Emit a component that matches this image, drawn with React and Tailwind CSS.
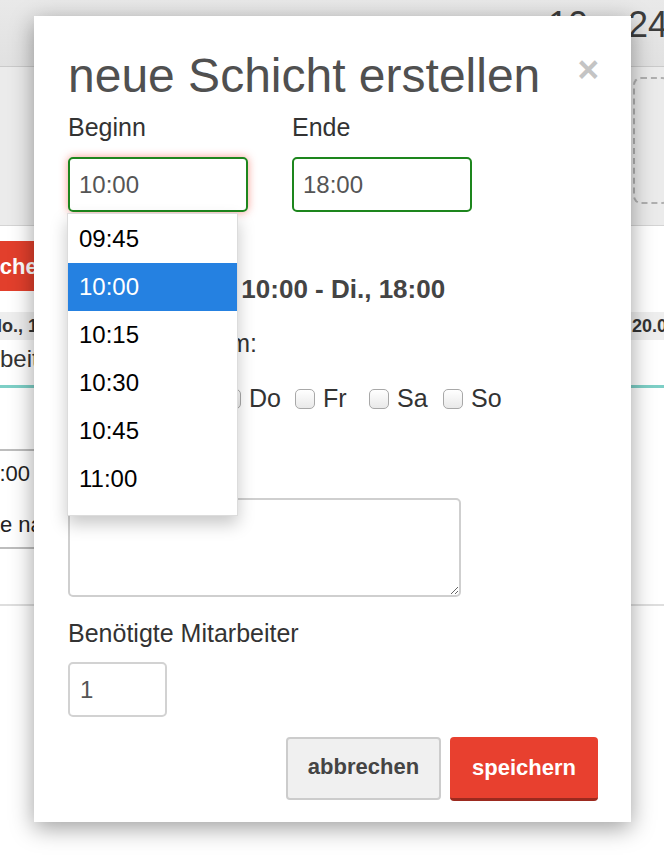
import React from 'react';

const times = ['09:45', '10:00', '10:15', '10:30', '10:45', '11:00'];

const days = [
    { label: 'Mo', w: 'w-[51px]' },
    { label: 'Di', w: 'w-[51px]' },
    { label: 'Mi', w: 'w-[51px]' },
    { label: 'Do', w: 'w-[74px]' },
    { label: 'Fr', w: 'w-[74px]' },
    { label: 'Sa', w: 'w-[74px]' },
    { label: 'So', w: 'w-[74px]' },
];

function Checkbox() {
    return (
        <span className="block w-[20px] h-[20px] shrink-0 rounded-[5px] border border-[#a8a8a8] bg-gradient-to-b from-white to-[#e9e9e9]" />
    );
}

export default function App() {
    return (
        <div className="relative w-[664px] h-[862px] overflow-hidden bg-white font-['Liberation_Sans',Arial,sans-serif]">

            {/* page behind the dialog */}
            <div className="h-[67px] bg-gradient-to-b from-[#e9e9e9] to-[#e1e1e1] border-b border-[#cacaca] flex justify-end pt-[7px] -mr-[4px]">
                <span className="text-[36px] leading-none text-[#3c3c3c] whitespace-nowrap">10 – 24</span>
            </div>
            <div className="h-[159px] bg-[#ebebeb] border-b border-[#d4d4d4] flex justify-end pt-[10px]">
                <div className="w-[37px] h-[127px] -mr-[6px] rounded-[8px] border-2 border-dashed border-[#b0b0b0]" />
            </div>
            <div className="mt-[15px] flex">
                <div className="h-[50px] -ml-[46px] pl-[12px] pr-[20px] flex items-center bg-[#e23f2c] text-white text-[22px] font-bold">
                    Woche hinzufügen
                </div>
            </div>
            <div className="mt-[21px] h-[28px] bg-[#eeeeee] flex items-center justify-between text-[18px] font-bold text-[#333]">
                <span className="-ml-[13px] whitespace-nowrap">Mo., 16.03.</span>
                <span className="-mr-[18px] whitespace-nowrap">Fr., 20.03.</span>
            </div>
            <div className="mt-[5px] h-[27px] flex items-center text-[24px] text-[#333]">
                <span className="-ml-[24px] whitespace-nowrap">Arbeitszeit</span>
            </div>
            <div className="mt-[13px] h-[3px] bg-[#7dcfc6]" />
            <div className="mt-[61px] w-[120px] h-[100px] border-y-2 border-[#bdbdbd] flex flex-col justify-between py-[6px] text-[22px] text-[#222]">
                <span className="-ml-[25px] whitespace-nowrap">10:00</span>
                <span className="-ml-[38px] whitespace-nowrap">Seite nach</span>
            </div>
            <div className="mt-[55px] h-[2px] bg-[#dedede]" />

            {/* dialog */}
            <div className="absolute left-[34px] top-[16px] w-[597px] h-[806px] bg-white shadow-[0_6px_22px_rgba(0,0,0,0.38)] pt-[33px] pl-[34px] text-[#333]">
                <div className="flex items-start justify-between pr-[32px]">
                    <h1 className="text-[48px] leading-[53px] text-[#505050] whitespace-nowrap">neue Schicht erstellen</h1>
                    <span className="mt-[2px] text-[37px] leading-none font-bold text-[#c4c4c4]">×</span>
                </div>

                <div className="mt-[8px] flex gap-[44px]">
                    <div className="w-[180px]">
                        <div className="text-[25px] leading-[35px]">Beginn</div>
                        <div className="relative mt-[12px]">
                            <div className="h-[55px] border-2 border-[#1d861d] rounded-[5px] shadow-[0_0_9px_rgba(240,70,50,0.55)] flex items-center px-[9px] text-[24px] text-[#555]">
                                10:00
                            </div>
                            <div className="absolute z-10 -left-[1px] top-full mt-[1px] w-[171px] bg-white border border-[#dcdcdc] shadow-[0_8px_16px_rgba(0,0,0,0.22)] pt-[1px] pb-[12px]">
                                {times.map(t => (
                                    <div
                                        key={t}
                                        className={`h-[48px] leading-[48px] pl-[11px] text-[24px] ${t === '10:00' ? 'bg-[#2581e1] text-white' : 'text-black'}`}
                                    >
                                        {t}
                                    </div>
                                ))}
                            </div>
                        </div>
                    </div>
                    <div className="w-[180px]">
                        <div className="text-[25px] leading-[35px]">Ende</div>
                        <div className="mt-[12px] h-[55px] border-2 border-[#1d861d] rounded-[5px] flex items-center px-[9px] text-[24px] text-[#555]">
                            18:00
                        </div>
                    </div>
                </div>

                <div className="mt-[59px] text-[26px] leading-[36px] font-bold text-[#444] whitespace-nowrap">
                    Zeitraum: Di., 10:00 - Di., 18:00
                </div>

                <div className="mt-[19px] text-[25px] leading-[35px]">Wiederholen am:</div>

                <div className="mt-[20px] h-[35px] flex items-center text-[25px]">
                    {days.map(d => (
                        <div key={d.label} className={`flex items-center ${d.w}`}>
                            <Checkbox />
                            <span className="ml-[8px]">{d.label}</span>
                        </div>
                    ))}
                </div>

                <div className="mt-[35px] pl-[2px] text-[25px] leading-[35px]">Notiz</div>
                <textarea className="mt-[12px] block w-[393px] h-[99px] border-2 border-[#cfcfcf] rounded-[5px] resize" />

                <div className="mt-[19px] text-[25px] leading-[35px]">Benötigte Mitarbeiter</div>
                <div className="mt-[11px] w-[99px] h-[55px] border-2 border-[#d2d2d2] rounded-[5px] flex items-center px-[10px] text-[24px] text-[#555]">
                    1
                </div>

                <div className="mt-[20px] flex justify-end gap-[9px] pr-[33px]">
                    <button className="w-[155px] h-[63px] bg-[#f0f0f0] border-2 border-[#cccccc] rounded-[4px] pb-[4px] text-[22px] font-bold text-[#444]">
                        abbrechen
                    </button>
                    <button className="w-[148px] h-[64px] bg-[#e8402f] border-b-[3px] border-[#9c2a1f] rounded-[4px] pb-[1px] text-[22px] font-bold text-white">
                        speichern
                    </button>
                </div>
            </div>
        </div>
    );
}
